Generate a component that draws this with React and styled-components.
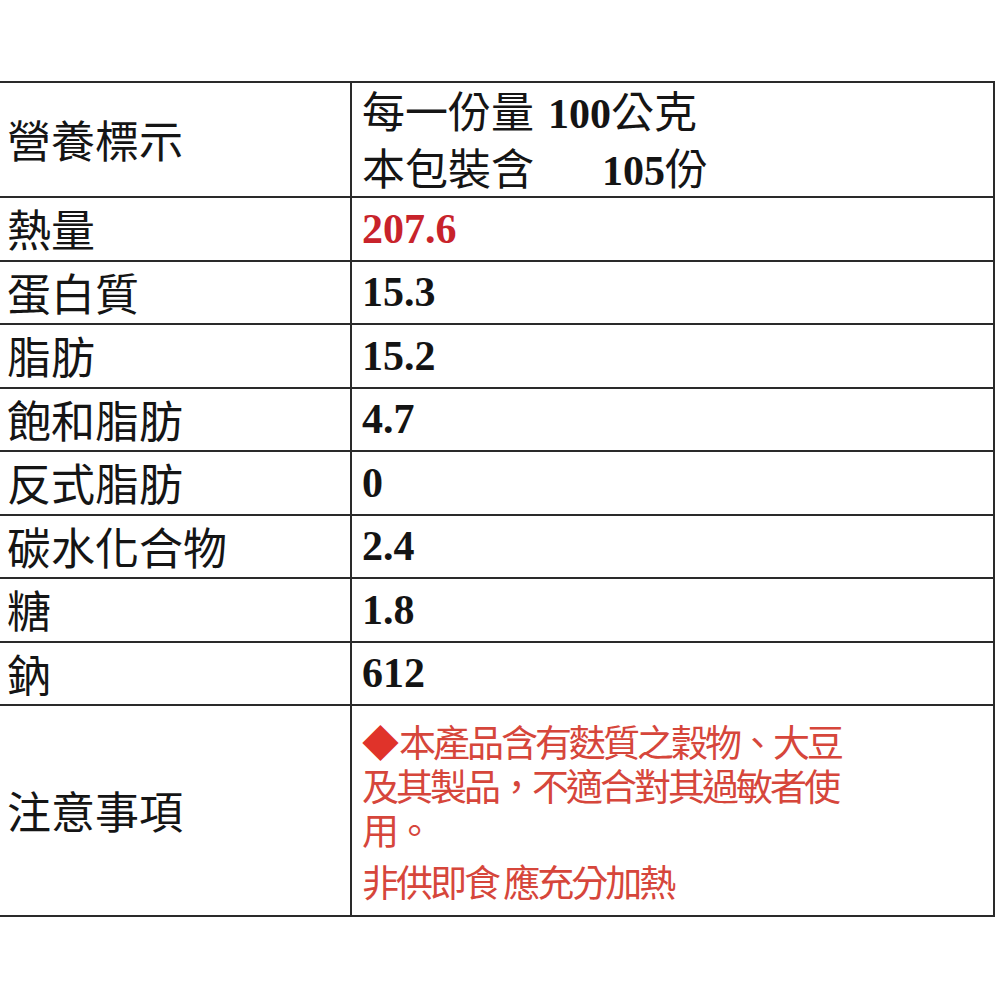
import React from 'react';
import styled, { createGlobalStyle } from 'styled-components';

const GlobalStyle = createGlobalStyle`
  html, body {
    margin: 0;
    padding: 0;
    background: #fff;
  }
  body {
    font-family: "Noto Sans CJK TC", "Noto Sans", sans-serif;
    color: #111;
  }
`;

const Page = styled.div`
  width: 1000px;
  height: 1000px;
  padding-top: 81px;
  box-sizing: border-box;
`;

const Table = styled.div`
  display: grid;
  grid-template-columns: 350px 645px;
  grid-template-rows: 115px repeat(8, 63.5px) 211px;
  width: 995px;
  border-right: 2px solid #2a2a2a;
  border-bottom: 2px solid #2a2a2a;
  box-sizing: border-box;
`;

const Cell = styled.div`
  display: flex;
  align-items: center;
  border-top: 2px solid #2a2a2a;
  box-sizing: border-box;
  min-width: 0;
`;

const LabelCell = styled(Cell)`
  padding-left: 7px;
  font-size: 44px;
  line-height: 1.2;
  color: #151515;
`;

const ValueCell = styled(Cell)`
  border-left: 2px solid #2a2a2a;
  padding-left: 10px;
  flex-direction: column;
  align-items: flex-start;
  justify-content: center;
`;

const HeaderLine = styled.div`
  font-size: 43px;
  line-height: 52px;
  color: #151515;
  white-space: pre;
`;

const Num = styled.span`
  font-family: "Liberation Serif", "Times New Roman", serif;
  font-weight: 700;
  font-size: 42px;
  color: ${p => (p.$red ? '#c8232b' : '#141414')};
  margin-left: ${p => p.$gap || 0}px;
`;

const Notes = styled.div`
  width: 484px;
  font-size: 37px;
  letter-spacing: -3px;
  line-height: 44px;
  color: #d6463b;
`;

const NoteLine = styled.p`
  margin: 0;
  & + & {
    margin-top: 8px;
  }
`;

const Diamond = styled.span`
  color: #e0332a;
  letter-spacing: 0;
  margin-right: 0;
`;

const rows = [
  ['熱量', '207.6', true],
  ['蛋白質', '15.3'],
  ['脂肪', '15.2'],
  ['飽和脂肪', '4.7'],
  ['反式脂肪', '0'],
  ['碳水化合物', '2.4'],
  ['糖', '1.8'],
  ['鈉', '612'],
];

export default function App() {
  return (
    <Page>
      <GlobalStyle />
      <Table>
        <LabelCell>營養標示</LabelCell>
        <ValueCell>
          <HeaderLine>
            每一份量<Num $gap={14}>100</Num>公克
          </HeaderLine>
          <HeaderLine>
            本包裝含<Num $gap={68}>105</Num>份
          </HeaderLine>
        </ValueCell>

        {rows.map(([label, value, red]) => (
          <React.Fragment key={label}>
            <LabelCell>{label}</LabelCell>
            <ValueCell>
              <Num $red={red}>{value}</Num>
            </ValueCell>
          </React.Fragment>
        ))}

        <LabelCell>注意事項</LabelCell>
        <ValueCell>
          <Notes>
            <NoteLine>
              <Diamond>◆</Diamond>本產品含有麩質之穀物、大豆及其製品，不適合對其過敏者使用。
            </NoteLine>
            <NoteLine>非供即食 應充分加熱</NoteLine>
          </Notes>
        </ValueCell>
      </Table>
    </Page>
  );
}
